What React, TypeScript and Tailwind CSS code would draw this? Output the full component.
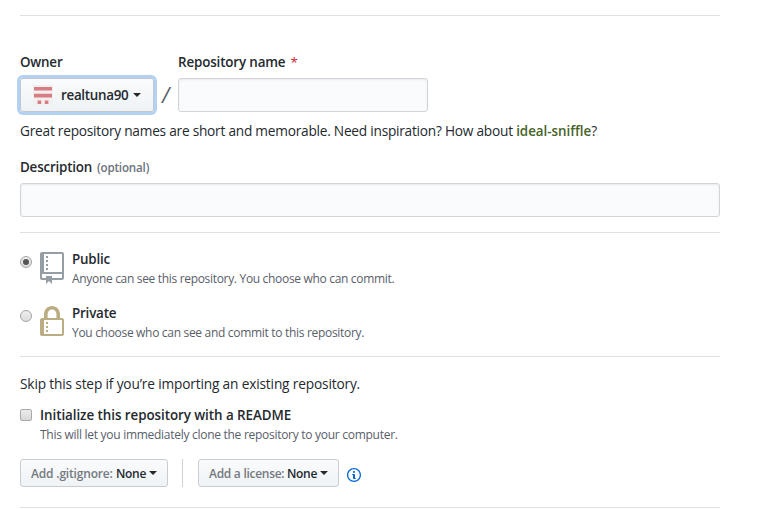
import React from 'react';

function Rule() {
  return <div className="h-px w-[700px] bg-[#dfe2e5]" />;
}

function Caret({ className = '' }: { className?: string }) {
  return (
    <span
      className={`h-0 w-0 shrink-0 border-x-4 border-t-4 border-x-transparent border-t-[#24292e] ${className}`}
    />
  );
}

function Avatar() {
  return (
    <svg className="ml-3 h-5 w-5 shrink-0" viewBox="0 0 20 20">
      <rect width="20" height="20" fill="#f0f0f0" />
      <path
        fill="#d97b82"
        d="M1 2h18v3.6H1zM1 8.8h18v3.6H1zM4.6 15.6h3.6v3.4H4.6zM11.8 15.6h3.6v3.4h-3.6z"
      />
    </svg>
  );
}

function RepoIcon() {
  return (
    <svg className="mt-[3px] h-8 w-6 shrink-0" viewBox="0 0 12 16" fill="#959da5">
      <path
        fillRule="evenodd"
        d="M4 9H3V8h1v1zm0-3H3v1h1V6zm0-2H3v1h1V4zm0-2H3v1h1V2zm8-1v12c0 .55-.45 1-1 1H6v2l-1.5-1.5L3 16v-2H1c-.55 0-1-.45-1-1V1c0-.55.45-1 1-1h10c.55 0 1 .45 1 1zm-1 10H1v2h2v-1h3v1h5v-2zm0-10H2v9h9V1z"
      />
    </svg>
  );
}

function LockIcon() {
  return (
    <svg className="mt-[3px] h-8 w-6 shrink-0" viewBox="0 0 12 16" fill="#bbad83">
      <path
        fillRule="evenodd"
        d="M4 13H3v-1h1v1zm8-6v7c0 .55-.45 1-1 1H1c-.55 0-1-.45-1-1V7c0-.55.45-1 1-1h1V4c0-2.2 1.8-4 4-4s4 1.8 4 4v2h1c.55 0 1 .45 1 1zM3.8 6h4.41V4c0-1.22-.98-2.2-2.2-2.2-1.22 0-2.2.98-2.2 2.2v2H3.8zM11 7H2v7h9V7zM4 8H3v1h1V8zm0 2H3v1h1v-1z"
      />
    </svg>
  );
}

function InfoIcon() {
  return (
    <svg className="mt-1 ml-2 h-4 w-3.5 shrink-0" viewBox="0 0 14 16" fill="#0366d6">
      <path
        fillRule="evenodd"
        d="M6.3 5.69a.942.942 0 0 1-.28-.7c0-.28.09-.52.28-.7.19-.18.42-.28.7-.28.28 0 .52.09.7.28.18.19.28.42.28.7 0 .28-.09.52-.28.7a1 1 0 0 1-.7.3c-.28 0-.52-.11-.7-.3zM8 7.99c-.02-.25-.11-.48-.31-.69-.2-.19-.42-.3-.69-.31H6c-.27.02-.48.13-.69.31-.2.2-.3.44-.31.69h1v3c.02.27.11.5.31.69.2.2.42.31.69.31h1c.27 0 .48-.11.69-.31.2-.19.3-.42.31-.69H8V7.98v.01zM7 2.3c-3.14 0-5.7 2.54-5.7 5.68 0 3.14 2.56 5.7 5.7 5.7s5.7-2.55 5.7-5.7c0-3.15-2.56-5.69-5.7-5.69v.01zM7 .98c3.86 0 7 3.14 7 7s-3.14 7-7 7-7-3.12-7-7 3.14-7 7-7z"
      />
    </svg>
  );
}

function Radio({ checked = false }: { checked?: boolean }) {
  return (
    <span className="mt-[7px] mr-2 flex h-3 w-3 shrink-0 items-center justify-center rounded-full border border-[#a3a3a3] bg-linear-to-b from-[#eeeeee] to-[#dcdcdc]">
      {checked && <span className="h-1.5 w-1.5 rounded-full bg-[#555555]" />}
    </span>
  );
}

export default function App() {
  return (
    <div className="h-[509px] w-[760px] overflow-hidden bg-white pt-[15px] pl-5 font-['Open_Sans','Noto_Sans',sans-serif] text-[13.4px] leading-[21px] whitespace-nowrap text-[#24292e]">
      <Rule />

      <div className="mt-9 flex">
        <div className="w-[158px] font-semibold">
          <span className="tracking-[-0.2px]">Owner</span>
        </div>
        <div className="font-semibold">
          <span className="tracking-[-0.15px]">Repository name</span>
          <span className="ml-[5px] font-normal text-[#cb2431]">*</span>
        </div>
      </div>
      <div className="mt-[5px] flex h-[34px] items-center">
        <button className="flex h-[34px] w-[134px] items-center rounded-[3px] border border-[#c3c8ce] bg-linear-to-b from-[#fafbfc] to-[#eff3f6] font-semibold shadow-[0_0_0_3px_#b3d1f3]">
          <Avatar />
          <span className="ml-2 w-[67px] text-left tracking-[-0.3px]">realtuna90</span>
          <Caret className="ml-[5px]" />
        </button>
        <span className="w-6 pl-2 text-[21px] text-[#586069] italic">/</span>
        <div className="h-[34px] w-[250px] rounded-[3px] border border-[#d1d5da] bg-[#fafbfc] shadow-[inset_0_1px_2px_rgba(27,31,35,0.075)]" />
      </div>
      <p className="mt-[9px] h-[21px] text-[13.7px] leading-5 tracking-[-0.24px]">
        Great repository names are short and memorable. Need inspiration? How about{' '}
        <span className="text-[13.4px] font-semibold tracking-[-0.03px] text-[#476329]">
          ideal-sniffle
        </span>
        ?
      </p>

      <div className="mt-[15px] flex">
        <span className="w-[77px] font-semibold tracking-[-0.2px]">Description</span>
        <span className="text-[11.6px] font-semibold tracking-[-0.17px] text-[#6a717a]">
          (optional)
        </span>
      </div>
      <div className="mt-[5px] mb-[15px] h-[34px] w-[700px] rounded-[3px] border border-[#d1d5da] bg-[#fafbfc] shadow-[inset_0_1px_2px_rgba(27,31,35,0.075)]" />
      <Rule />

      <div className="mt-4 flex h-[54px]">
        <Radio checked />
        <RepoIcon />
        <div className="ml-2">
          <div className="font-semibold tracking-[-0.2px]">Public</div>
          <div className="text-[12px] leading-[18px] tracking-[-0.32px] text-[#586069]">
            Anyone can see this repository. You choose who can commit.
          </div>
        </div>
      </div>
      <div className="flex h-[53px]">
        <Radio />
        <LockIcon />
        <div className="ml-2">
          <div className="font-semibold tracking-[-0.2px]">Private</div>
          <div className="text-[12px] leading-[18px] tracking-[-0.31px] text-[#586069]">
            You choose who can see and commit to this repository.
          </div>
        </div>
      </div>
      <Rule />

      <p className="mt-[17px] h-[21px] text-[13.7px] leading-5 tracking-[-0.16px]">
        Skip this step if you’re importing an existing repository.
      </p>
      <div className="mt-2.5 flex">
        <span className="mt-1 mr-2 h-3 w-3 rounded-[2px] border border-[#a9a9a9] bg-linear-to-b from-[#ececec] to-[#d8d8d8]" />
        <div>
          <div className="font-semibold tracking-[-0.06px]">
            Initialize this repository with a README
          </div>
          <div className="text-[12px] leading-[18px] tracking-[-0.28px] text-[#586069]">
            This will let you immediately clone the repository to your computer.
          </div>
        </div>
      </div>

      <div className="mt-[15px] mb-5 flex h-7 items-center text-[12px]">
        <button className="flex h-7 w-[148px] items-center rounded-[3px] border border-[#c9cdd1] bg-linear-to-b from-[#fafbfc] to-[#eff3f6] pl-2.5 font-semibold">
          <span className="w-[85px] text-left tracking-[-0.18px] text-[#757a80]">
            Add .gitignore:
          </span>
          <span className="w-[33px] text-left tracking-[-0.3px]">None</span>
          <Caret />
        </button>
        <span className="mx-3.5 h-7 w-px bg-[#cfd3d7]" />
        <button className="ml-px flex h-7 w-[141px] items-center rounded-[3px] border border-[#c9cdd1] bg-linear-to-b from-[#fafbfc] to-[#eff3f6] pl-2.5 font-semibold">
          <span className="w-[78px] text-left tracking-[-0.28px] text-[#757a80]">
            Add a license:
          </span>
          <span className="w-[33px] text-left tracking-[-0.3px]">None</span>
          <Caret />
        </button>
        <InfoIcon />
      </div>
      <Rule />
    </div>
  );
}
